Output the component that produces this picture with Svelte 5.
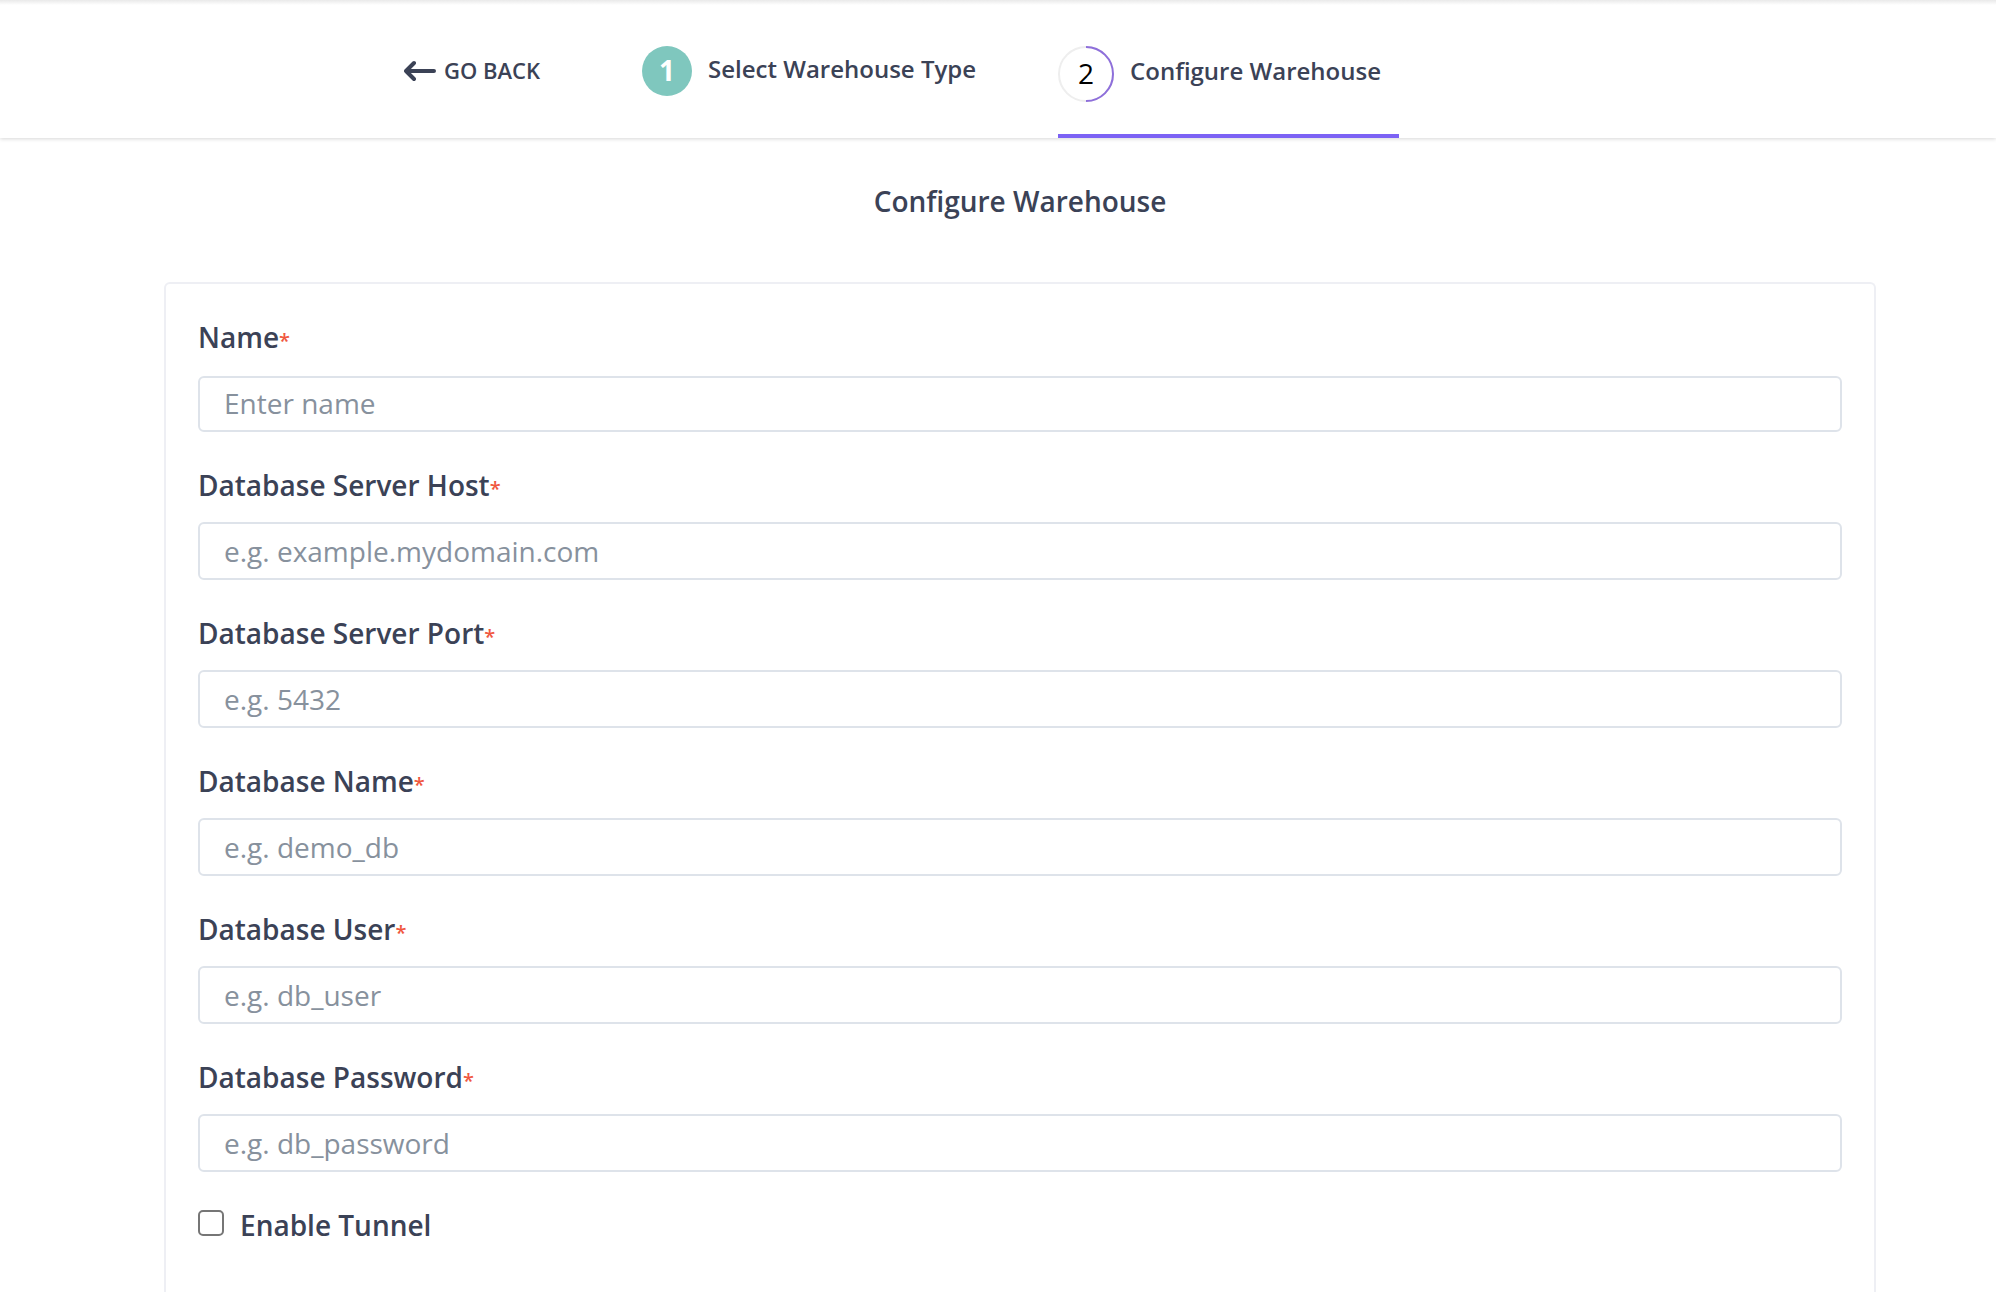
<script>
  const fields = [
    { id: 'name', label: 'Name', placeholder: 'Enter name', type: 'text', compact: true },
    { id: 'host', label: 'Database Server Host', placeholder: 'e.g. example.mydomain.com', type: 'text' },
    { id: 'port', label: 'Database Server Port', placeholder: 'e.g. 5432', type: 'text' },
    { id: 'database', label: 'Database Name', placeholder: 'e.g. demo_db', type: 'text' },
    { id: 'user', label: 'Database User', placeholder: 'e.g. db_user', type: 'text' },
    { id: 'password', label: 'Database Password', placeholder: 'e.g. db_password', type: 'password' }
  ];

  let values = $state({ name: '', host: '', port: '', database: '', user: '', password: '' });
  let tunnel = $state(false);
</script>

<div class="page">
  <header class="topbar">
    <button class="back" type="button">
      <svg width="34" height="24" viewBox="0 0 34 24" aria-hidden="true">
        <path d="M10 5 L2 13 L10 21 M2 13 H30" fill="none" stroke="currentColor" stroke-width="4" stroke-linecap="round" stroke-linejoin="round" />
      </svg>
      <span>GO BACK</span>
    </button>
    <nav class="steps" aria-label="Setup steps">
      <a class="step" href="#type">
        <span class="done">1</span>
        <span>Select Warehouse Type</span>
      </a>
      <a class="step active" href="#configure" aria-current="step">
        <span class="progress">
          <svg width="56" height="56" viewBox="0 0 56 56" aria-hidden="true">
            <circle cx="28" cy="28" r="27" fill="none" stroke="#eeeeee" stroke-width="2" />
            <path d="M28 1 A27 27 0 0 1 28 55" fill="none" stroke="#8e6fdb" stroke-width="2" />
          </svg>
          <span class="number">2</span>
        </span>
        <span>Configure Warehouse</span>
      </a>
    </nav>
  </header>

  <main>
    <h1>Configure Warehouse</h1>
    <form class="card">
      {#each fields as field (field.id)}
        <div class="field" class:compact={field.compact}>
          <label for={field.id}>{field.label}<span class="required">*</span></label>
          <input id={field.id} type={field.type} placeholder={field.placeholder} bind:value={values[field.id]} />
        </div>
      {/each}
      <div class="tunnel">
        <input id="tunnel" type="checkbox" bind:checked={tunnel} />
        <label for="tunnel">Enable Tunnel</label>
      </div>
    </form>
  </main>
</div>

<style>
  :global(body) {
    margin: 0;
    background: #fff;
  }

  .page {
    box-sizing: border-box;
    min-height: 100vh;
    display: flex;
    flex-direction: column;
    color: #3b4256;
    font-family: 'Open Sans', 'Noto Sans', sans-serif;
    font-size: 28px;
    line-height: 38px;
    font-weight: 600;
  }

  .topbar {
    box-sizing: border-box;
    height: 138px;
    display: flex;
    padding: 0 120px 0 404px;
    font-size: 24px;
    line-height: 32px;
    background: linear-gradient(#e9e9e9, #fff 5px);
    box-shadow: 0 1px 4px rgba(0, 0, 0, 0.16);
  }

  .back {
    display: flex;
    align-items: center;
    align-self: flex-start;
    gap: 6px;
    margin-top: 54px;
    padding: 0;
    border: 0;
    background: none;
    color: inherit;
    font: inherit;
    font-size: 22px;
    cursor: pointer;
  }

  .steps {
    display: flex;
    gap: 82px;
    margin-left: 102px;
  }

  .step {
    box-sizing: border-box;
    display: flex;
    align-items: flex-start;
    gap: 16px;
    padding-top: 46px;
    color: inherit;
    text-decoration: none;
    line-height: 46px;
    white-space: nowrap;
  }

  .active {
    padding-right: 18px;
    border-bottom: 4px solid #7c62f4;
    line-height: 50px;
  }

  .done {
    width: 50px;
    height: 50px;
    border-radius: 50%;
    background: #7fc7be;
    color: #fff;
    font-size: 28px;
    font-weight: 700;
    line-height: 48px;
    text-align: center;
  }

  .progress {
    display: grid;
    place-items: start center;
    width: 56px;
    height: 56px;
  }

  .progress svg,
  .number {
    grid-area: 1 / 1;
  }

  .number {
    color: #000;
    font-size: 28px;
    font-weight: 400;
    line-height: 54px;
  }

  main {
    flex: 1;
    display: flex;
    flex-direction: column;
    padding: 44px 120px 0 164px;
  }

  h1 {
    margin: 0 0 62px;
    font: inherit;
    text-align: center;
  }

  .card {
    flex: 1;
    padding: 34px 32px 32px;
    border: 2px solid #eeeff4;
    border-bottom: 0;
    border-radius: 6px 6px 0 0;
  }

  .field {
    display: flex;
    flex-direction: column;
    gap: 18px;
    margin-bottom: 34px;
  }

  .compact {
    gap: 20px;
  }

  .required {
    color: #f0583f;
    font-size: 20px;
    line-height: 20px;
  }

  .field input {
    box-sizing: border-box;
    width: 100%;
    height: 58px;
    padding: 0 24px;
    border: 2px solid #dee3ea;
    border-radius: 6px;
    background: #fff;
    color: #3b4256;
    font: inherit;
    font-weight: 400;
  }

  .compact input {
    height: 56px;
    padding-bottom: 2px;
  }

  .field input::placeholder {
    color: #87919d;
    opacity: 1;
  }

  .tunnel {
    display: flex;
    align-items: flex-start;
    gap: 16px;
  }

  .tunnel input {
    appearance: none;
    box-sizing: border-box;
    width: 26px;
    height: 26px;
    margin: 4px 0 0;
    border: 2px solid #767676;
    border-radius: 5px;
    background: #fff;
  }

  .tunnel input:checked {
    background: #7c62f4;
  }
</style>
